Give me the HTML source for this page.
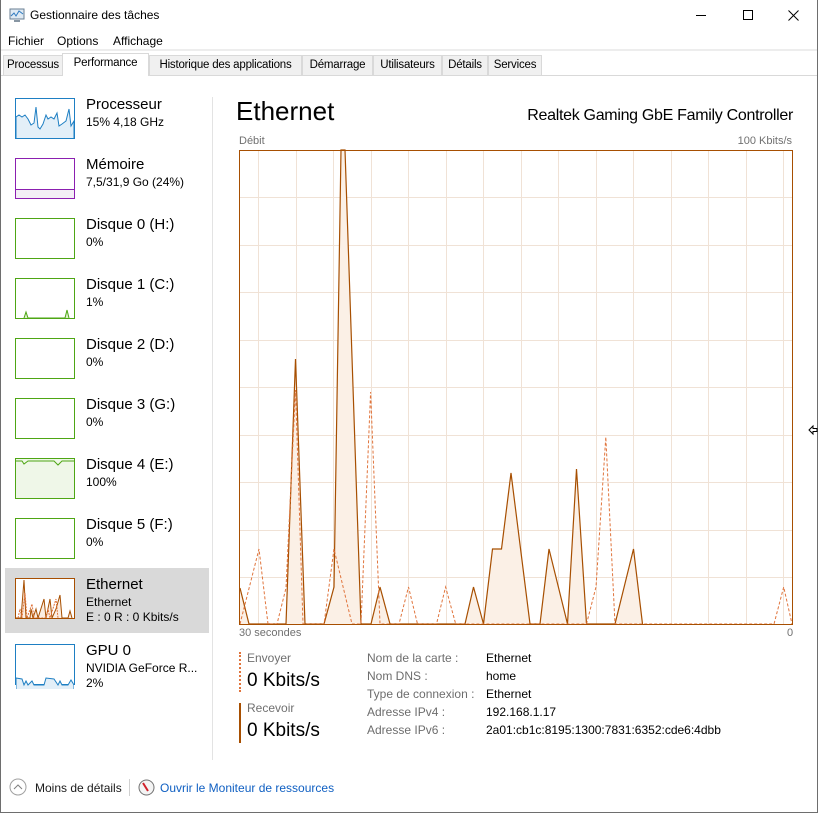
<!DOCTYPE html>
<html><head><meta charset="utf-8"><style>
*{margin:0;padding:0;box-sizing:border-box}
body{width:818px;height:813px;background:#fff;font-family:"Liberation Sans",sans-serif;color:#000;position:relative;overflow:hidden}
.a{position:absolute;white-space:nowrap}
.tab{position:absolute;top:55px;height:21px;border:1px solid #d9d9d9;background:#f0f0f0;font-size:11.5px;letter-spacing:-0.2px;padding:3px 0 0 0;text-align:center;overflow:hidden}
.th{position:absolute;left:15px;width:60px;height:41px;border:1px solid}
.t1{position:absolute;left:86px;font-size:15px}
.t2{position:absolute;left:86px;font-size:12px}
.lab{position:absolute;left:367px;font-size:12px;color:#6d6d6d}
.val{position:absolute;left:486px;font-size:12px}
</style></head><body>
<div style="position:absolute;left:0;top:0;width:818px;height:813px;border:1px solid #6e6e6e;border-top:none"></div>
<svg class="a" style="left:9px;top:8px" width="16" height="16" viewBox="0 0 16 16"><rect x="1" y="1" width="14" height="10" fill="#dfeaf3" stroke="#6a7f93"/><polyline points="2,8 5,5 7,8 10,3 14,6" fill="none" stroke="#2f7ac0"/><rect x="5" y="12" width="6" height="2" fill="#8896a3"/></svg>
<div class="a" style="left:30px;top:8px;font-size:12px">Gestionnaire des tâches</div>
<div class="a" style="left:696px;top:15px;width:10px;height:1px;background:#000"></div>
<div class="a" style="left:743px;top:10px;width:10px;height:10px;border:1px solid #000"></div>
<svg class="a" style="left:788px;top:10px" width="11" height="11"><path d="M0.5 0.5L10.5 10.5M10.5 0.5L0.5 10.5" stroke="#000"/></svg>
<div class="a" style="left:8px;top:34px;font-size:12px">Fichier</div>
<div class="a" style="left:57px;top:34px;font-size:12px">Options</div>
<div class="a" style="left:113px;top:34px;font-size:12px">Affichage</div>
<div class="a" style="left:1px;top:49px;width:816px;height:2px;background:#ededed"></div>
<div class="a" style="left:1px;top:75px;width:816px;height:1px;background:#d9d9d9"></div>
<div class="tab" style="left:3px;width:60px">Processus</div>
<div class="tab" style="left:62px;top:53px;height:23px;width:87px;background:#fff;border-bottom:none;padding-top:3px">Performance</div>
<div class="tab" style="left:149px;width:153px">Historique des applications</div>
<div class="tab" style="left:302px;width:71px">Démarrage</div>
<div class="tab" style="left:373px;width:69px">Utilisateurs</div>
<div class="tab" style="left:442px;width:46px">Détails</div>
<div class="tab" style="left:488px;width:54px">Services</div>

<div class="a" style="left:212px;top:97px;width:1px;height:663px;background:#e3e3e3"></div>
<div class="a" style="left:5px;top:568px;width:204px;height:65px;background:#d9d9d9"></div>

<div class="th" style="top:98px;border-color:#1e7fc3;background:#fff"><svg width="58" height="39"><polygon points="0,40 0,18 3,16 6,18 9,16 12,20 15,26 18,24 20,8 22,28 24,30 27,25 30,16 32,20 35,18 38,20 41,14 43,27 46,25 50,22 53,10 55,27 58,22 58,40" fill="#e3eff8" stroke="#1e7fc3"/></svg></div>
<div class="t1" style="top:96px">Processeur</div><div class="t2" style="top:115px">15% 4,18 GHz</div>
<div class="th" style="top:158px;border-color:#8b1fb0"><div style="position:absolute;left:0;right:0;bottom:0;height:9px;background:#f3eff5;border-top:1px solid #8b1fb0"></div></div>
<div class="t1" style="top:156px">Mémoire</div><div class="t2" style="top:175px">7,5/31,9 Go (24%)</div>
<div class="th" style="top:218px;border-color:#4ea614"></div>
<div class="t1" style="top:216px">Disque 0 (H:)</div><div class="t2" style="top:235px">0%</div>
<div class="th" style="top:278px;border-color:#4ea614"><svg width="58" height="39"><polyline points="8,39 10,33 12,39 49,39 51,31 53,39" fill="#dff0d0" stroke="#4ea614"/></svg></div>
<div class="t1" style="top:276px">Disque 1 (C:)</div><div class="t2" style="top:295px">1%</div>
<div class="th" style="top:338px;border-color:#4ea614"></div>
<div class="t1" style="top:336px">Disque 2 (D:)</div><div class="t2" style="top:355px">0%</div>
<div class="th" style="top:398px;border-color:#4ea614"></div>
<div class="t1" style="top:396px">Disque 3 (G:)</div><div class="t2" style="top:415px">0%</div>
<div class="th" style="top:458px;border-color:#4ea614;background:#eff7e8"><svg width="58" height="39"><polyline points="0,2 6,2 8,5 12,2 38,2 42,6 46,2 58,2" fill="none" stroke="#4ea614"/></svg></div>
<div class="t1" style="top:456px">Disque 4 (E:)</div><div class="t2" style="top:475px">100%</div>
<div class="th" style="top:518px;border-color:#4ea614"></div>
<div class="t1" style="top:516px">Disque 5 (F:)</div><div class="t2" style="top:535px">0%</div>
<div class="th" style="top:578px;border-color:#a74f01;background:#fff"><svg width="58" height="39"><polyline points="0,39 3,39 5,39 8,1 10,39 14,39 15,30 17,39 20,30 22,39 28,20 30,39 34,20 36,39 40,30 44,16 46,39 52,39 54,32 56,39" fill="#fbeee2" stroke="#a74f01"/><polyline points="2,39 4,30 6,39 9,14 11,39 16,25 18,39 30,39 32,30 34,39 40,20 42,39" fill="none" stroke="#e0743c" stroke-dasharray="2,1"/></svg></div>
<div class="t1" style="top:576px">Ethernet</div><div class="t2" style="top:595px">Ethernet</div><div class="t2" style="top:610px">E : 0 R : 0 Kbits/s</div>
<div class="th" style="top:644px;border-color:#1e7fc3"><svg width="58" height="44"><polyline points="0,44 0,33 6,34 8,40 10,36 12,40 16,36 18,40 28,40 30,33 38,34 42,40 44,36 46,40 52,40 55,35 58,40 58,44" fill="#e3eff8" stroke="#1e7fc3"/></svg></div>
<div class="t1" style="top:642px">GPU 0</div><div class="t2" style="top:661px">NVIDIA GeForce R...</div><div class="t2" style="top:676px">2%</div>

<div class="a" style="left:236px;top:96px;font-size:26px">Ethernet</div>
<div class="a" style="right:25px;top:107px;font-size:16px;text-align:right;letter-spacing:-0.3px">Realtek Gaming GbE Family Controller</div>
<div class="a" style="left:239px;top:135px;font-size:11px;color:#707070">Débit</div>
<div class="a" style="left:692px;top:135px;font-size:11px;color:#707070;width:100px;text-align:right">100 Kbits/s</div>

<svg class="a" style="left:0;top:0" width="818" height="813">
<g stroke="#f0e2d6" stroke-width="1">
<path d="M258.5 150V624M296.5 150V624M333.5 150V624M371.5 150V624M408.5 150V624M446.5 150V624M483.5 150V624M521.5 150V624M558.5 150V624M596.5 150V624M633.5 150V624M671.5 150V624M708.5 150V624M746.5 150V624M783.5 150V624"/>
<path d="M239 197.5H792M239 245.5H792M239 292.5H792M239 340.5H792M239 387.5H792M239 435.5H792M239 482.5H792M239 530.5H792M239 577.5H792"/>
</g>
<polygon points="240,624 240,588 249,624 286,624 295.5,359 305,624 324,624 334,587 341,150 345,150 361,624 371,624 380,587 390,624 465,624 473.5,587 483.5,624 492.5,549 501.5,549 511,473 530,624 540,624 549,549 567.5,624 576.5,469 586.5,624 615,624 633.5,549 642.5,624" fill="#fbf0e6" stroke="none"/>
<polyline points="240,588 249,624 286,624 295.5,359 305,624 324,624 334,587 341,150 345,150 361,624 371,624 380,587 390,624 465,624 473.5,587 483.5,624 492.5,549 501.5,549 511,473 530,624 540,624 549,549 567.5,624 576.5,469 586.5,624 615,624 633.5,549 642.5,624" fill="none" stroke="#a74f01" stroke-width="1.2"/>
<polyline points="240,624 259,549 268,624 277,624 286,588 295.5,390 303,624 324,624 334,549 352,624 361,624 370.6,392 380,624 399,624 408.5,587 417.5,624 436.5,624 445.6,587 455.7,624 586.5,624 596,587 605.8,437 615,624 774,624 783.7,587 792,624" fill="none" stroke="#e0743c" stroke-width="1" stroke-dasharray="3,2"/>
<rect x="239.5" y="150.5" width="553" height="474" fill="none" stroke="#a74f01"/>
</svg>
<div class="a" style="left:239px;top:627px;font-size:11px;color:#707070">30 secondes</div>
<div class="a" style="left:787px;top:627px;font-size:11px;color:#707070">0</div>

<div class="a" style="left:239px;top:652px;width:0;height:40px;border-left:2px dotted #e0743c"></div>
<div class="a" style="left:247px;top:651px;font-size:12px;color:#707070">Envoyer</div>
<div class="a" style="left:247px;top:670px;font-size:19px">0 Kbits/s</div>
<div class="a" style="left:239px;top:703px;width:2px;height:40px;background:#a74f01"></div>
<div class="a" style="left:247px;top:701px;font-size:12px;color:#707070">Recevoir</div>
<div class="a" style="left:247px;top:720px;font-size:19px">0 Kbits/s</div>

<div class="lab" style="top:651px">Nom de la carte :</div><div class="val" style="top:651px">Ethernet</div>
<div class="lab" style="top:669px">Nom DNS :</div><div class="val" style="top:669px">home</div>
<div class="lab" style="top:687px">Type de connexion :</div><div class="val" style="top:687px">Ethernet</div>
<div class="lab" style="top:705px">Adresse IPv4 :</div><div class="val" style="top:705px">192.168.1.17</div>
<div class="lab" style="top:723px">Adresse IPv6 :</div><div class="val" style="top:723px">2a01:cb1c:8195:1300:7831:6352:cde6:4dbb</div>

<svg class="a" style="left:808px;top:424px" width="10" height="12"><path d="M1 6L5 2V4.5H9V7.5H5V10Z" fill="#fff" stroke="#000"/></svg>

<svg class="a" style="left:9px;top:778px" width="18" height="18"><circle cx="9" cy="9" r="8" fill="none" stroke="#a0a0a0"/><path d="M5 11L9 7L13 11" fill="none" stroke="#808080"/></svg>
<div class="a" style="left:35px;top:781px;font-size:12px;color:#1a1a1a">Moins de détails</div>
<div class="a" style="left:129px;top:779px;width:1px;height:17px;background:#d0d0d0"></div>
<svg class="a" style="left:138px;top:779px" width="17" height="17"><circle cx="8.5" cy="8.5" r="7.5" fill="#f4f4f4" stroke="#707070"/><path d="M5 4L10 12" stroke="#d0202a" stroke-width="2"/></svg>
<div class="a" style="left:160px;top:781px;font-size:12px;color:#0f5fc2">Ouvrir le Moniteur de ressources</div>
</body></html>
